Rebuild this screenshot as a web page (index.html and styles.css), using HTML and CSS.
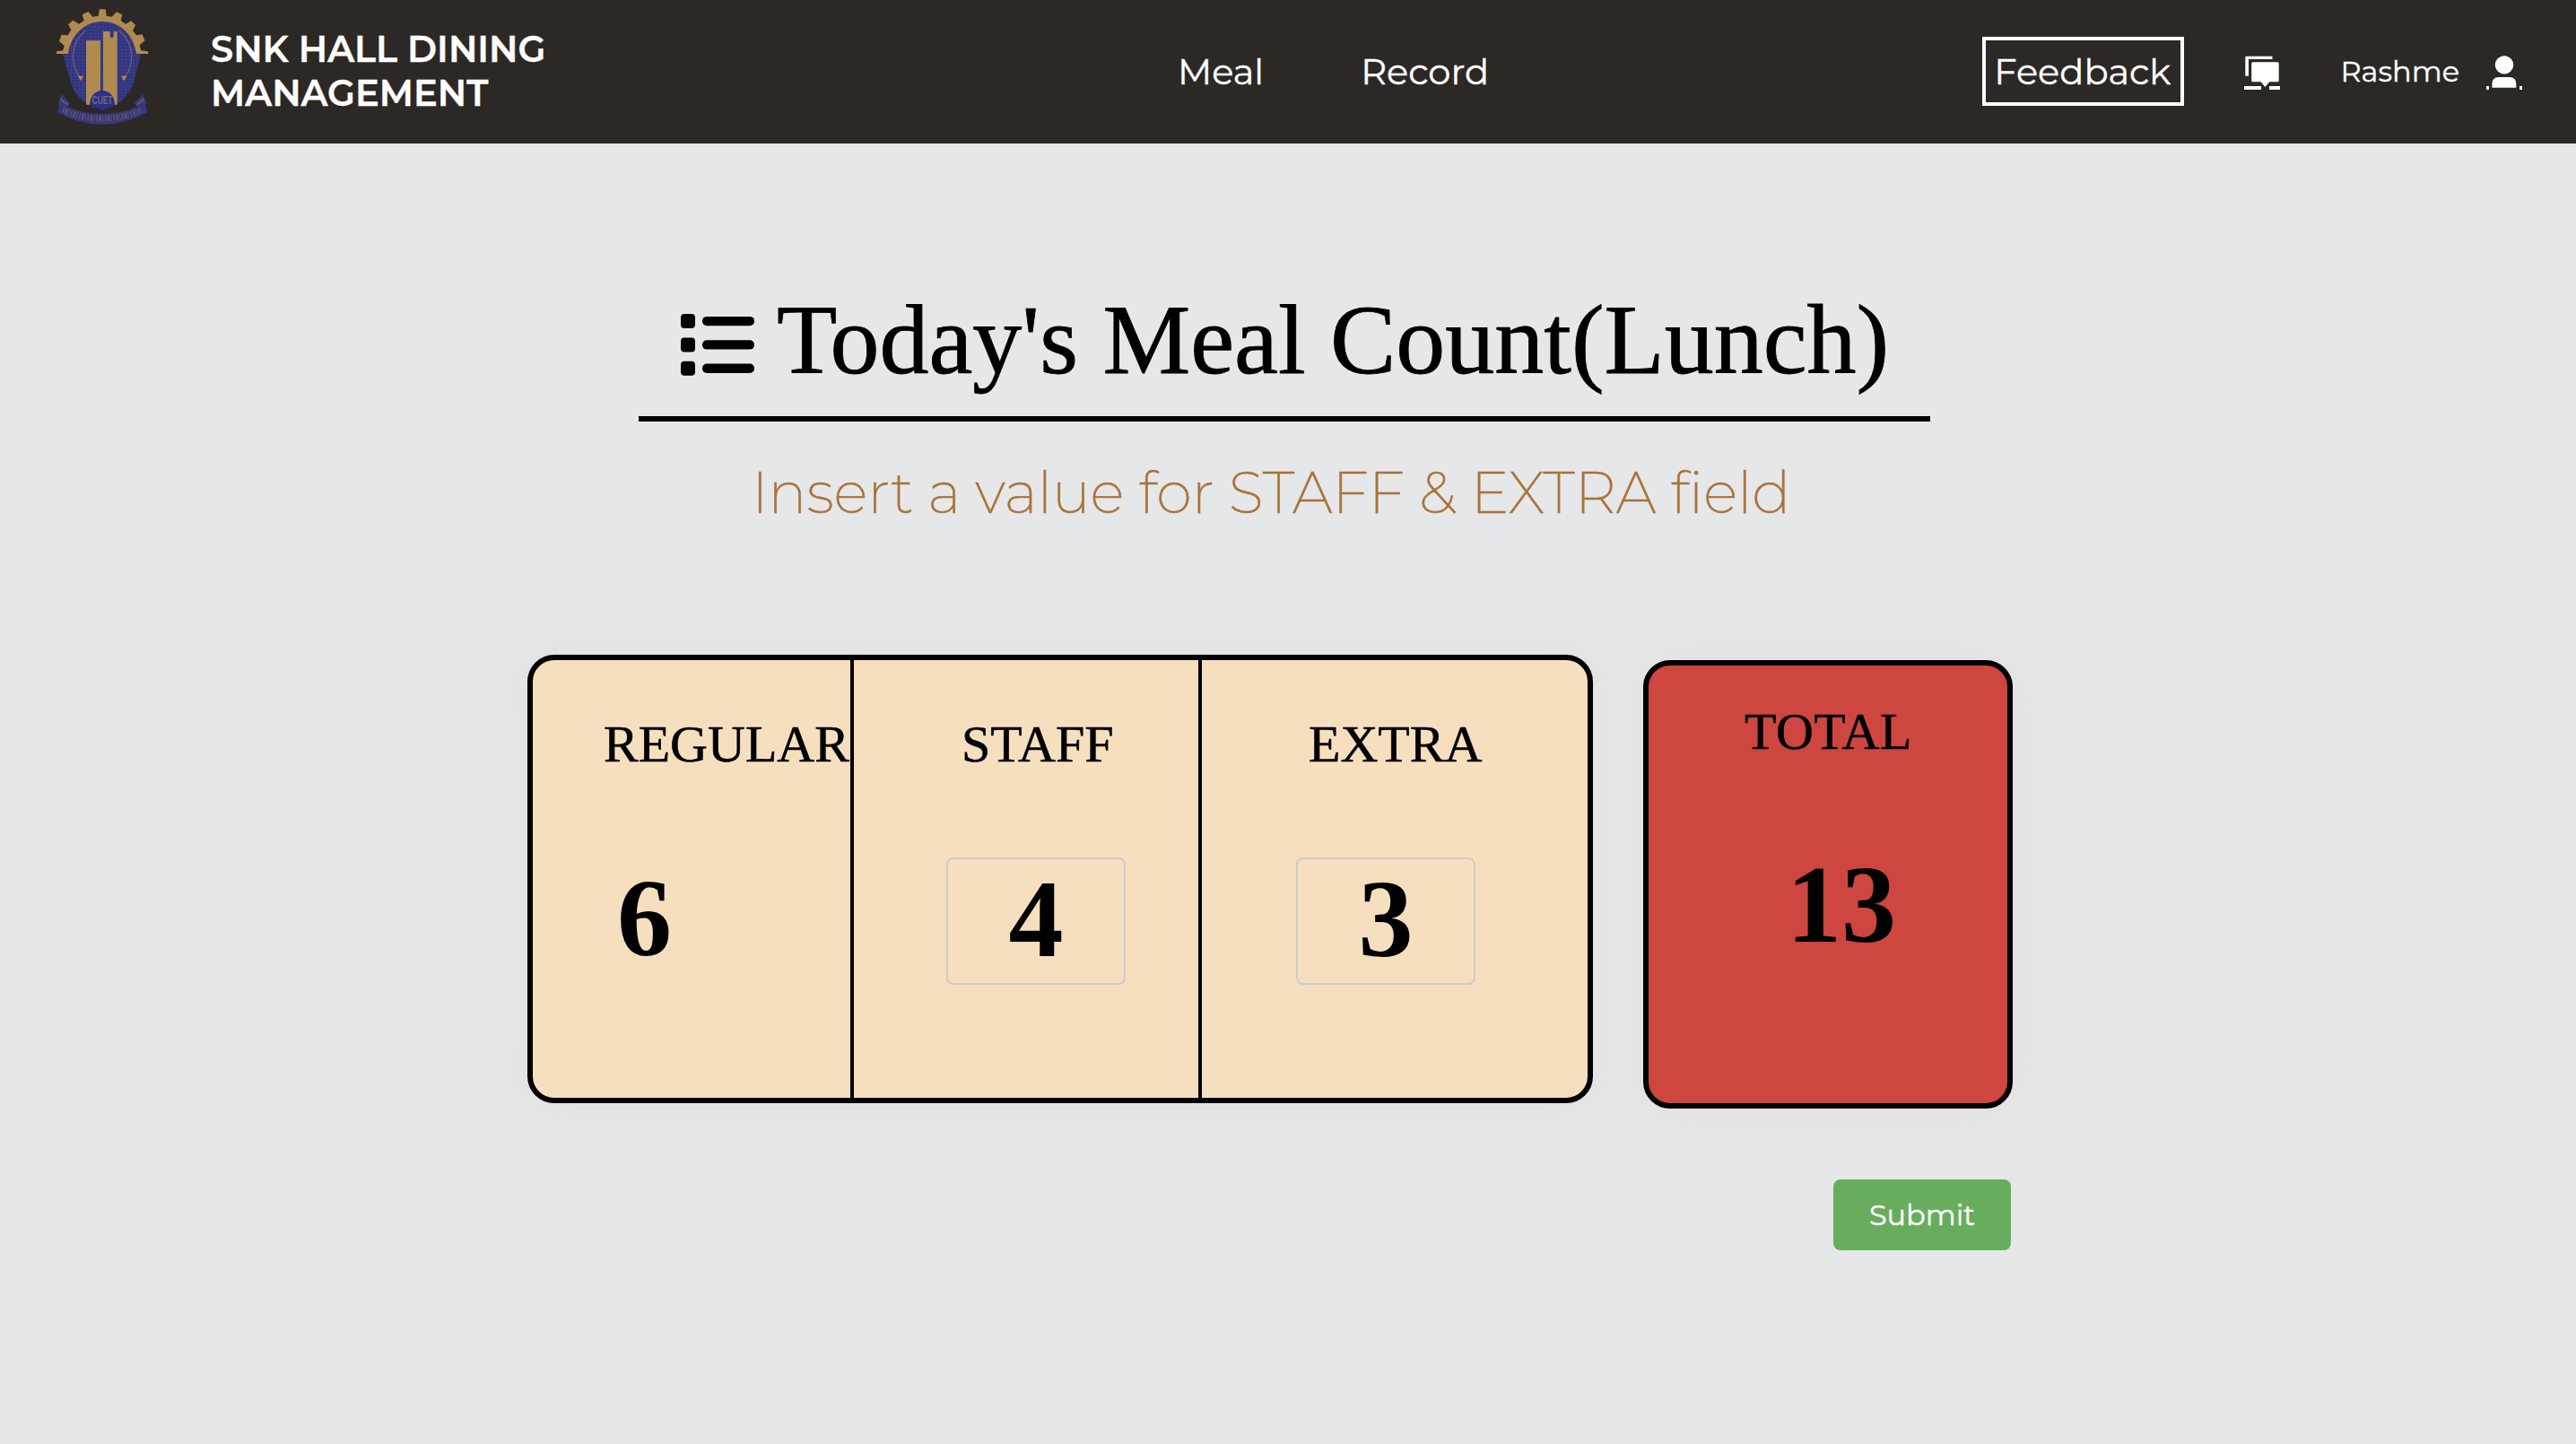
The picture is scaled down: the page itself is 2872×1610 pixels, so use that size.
FILE: index.html
```html
<!DOCTYPE html>
<html lang="en">
<head>
<meta charset="utf-8">
<title>SNK Hall Dining Management</title>
<link rel="stylesheet" href="styles.css">
</head>
<body>
<header class="navbar">
  <svg class="emblem" viewBox="0 0 480 480" aria-hidden="true">
    <defs>
      <pattern id="mesh" width="13" height="11" patternUnits="userSpaceOnUse">
        <path d="M0 0H13M0 0V11" stroke="#6b5d71" stroke-width="2.5" fill="none"/>
      </pattern>
    </defs>
    <path fill="#b08a4e" d="M68 180 L70 172 L91 169 L95 153 L78 138 L86 116 L107 118 L118 100 L108 82 L124 68 L144 80 L161 69 L155 49 L175 39 L190 56 L209 53 L213 31 L233 31 L236 53 L254 56 L270 40 L289 49 L284 69 L300 80 L319 70 L333 84 L324 103 L336 118 L356 115 L364 136 L347 151 L351 169 L375 172 L376 180Z"/>
    <path fill="#2e3384" d="M90 180 H108 C116 118 162 72 222 72 C282 72 328 118 336 180 H352 L328 272 C316 322 274 352 222 368 C170 352 128 322 116 272Z"/>
    <path fill="url(#mesh)" opacity=".6" d="M90 180 H108 C116 118 162 72 222 72 C282 72 328 118 336 180 H352 L328 272 C316 322 274 352 222 368 C170 352 128 322 116 272Z"/>
    <path d="M150 262 C112 218 114 145 166 102 M294 262 C332 218 330 145 278 102" fill="none" stroke="#6b5d71" stroke-width="4"/>
    <path d="M140 254 L159 254 L151 271Z M286 254 L305 254 L294 271Z" fill="#b08a4e"/>
    <path fill="#b08a4e" d="M168 136 H216 V350 H168Z M225 105 H248 V122 Q254 132 260 122 V105 H272 V350 H225Z"/>
    <path fill="#2a3189" d="M180 352 C180 322 198 303 222 303 C246 303 264 322 264 352 L222 370Z"/>
    <text x="222" y="349" text-anchor="middle" textLength="68" lengthAdjust="spacingAndGlyphs" class="emblem-text">CUET</text>
    <path fill="#373878" d="M86 315 L114 346 L104 357 Q222 405 340 357 L330 346 L357 315 L372 346 L366 353 L373 374 Q302 416 222 417 Q142 416 72 374 L79 353 L73 346Z"/>
    <path d="M90 368 Q222 426 354 368" fill="none" stroke="#5e5372" stroke-width="20" stroke-dasharray="4 5 7 4 3 6"/>
    <path d="M84 332 L106 350 M360 332 L338 350" stroke="#76657a" stroke-width="8" stroke-dasharray="5 4"/>
  </svg>
  <h1 class="brand">SNK HALL DINING<br>MANAGEMENT</h1>
  <nav class="links">
    <a>Meal</a>
    <a>Record</a>
  </nav>
  <div class="account">
    <a class="feedback">Feedback</a>
    <svg class="nav-icon" viewBox="0 0 40 40" fill="#fff" aria-hidden="true">
      <path d="M2.6 2.7H31.5V6H5V24.7H1.3V4A1.3 1.3 0 0 1 2.6 2.7Z"/>
      <path d="M9.7 9.3H37.2A1.5 1.5 0 0 1 38.7 10.8V29.8A1.5 1.5 0 0 1 37.2 31.3H28.2L23.4 37L18.6 31.3H9.7A1.5 1.5 0 0 1 8.2 29.8V10.8A1.5 1.5 0 0 1 9.7 9.3Z"/>
      <path d="M0 36H19V40H0ZM28 36H40V40H28Z"/>
    </svg>
    <span class="user">Rashme</span>
    <svg class="nav-icon" viewBox="0 0 40 40" fill="#fff" aria-hidden="true">
      <circle cx="20" cy="12.4" r="10.2"/>
      <path d="M6.4 37.7V33.5Q6.4 26 14 26H25.8Q33.3 26 33.3 33.5V37.7ZM0 36H3V40H0ZM37 36H40V40H37Z"/>
    </svg>
  </div>
</header>
<main class="page">
  <h2 class="title">
    <svg class="list-icon" viewBox="0 0 82 69" aria-hidden="true">
      <rect x="0" y="0" width="16" height="16" rx="4"/>
      <rect x="0" y="26.4" width="16" height="16" rx="4"/>
      <rect x="0" y="52.8" width="16" height="16" rx="4"/>
      <rect x="24" y="2.9" width="58" height="10.4" rx="5"/>
      <rect x="24" y="29.2" width="58" height="10.4" rx="5"/>
      <rect x="24" y="55.5" width="58" height="10.4" rx="5"/>
    </svg>
    <span>Today's Meal Count(Lunch)</span>
  </h2>
  <p class="hint">Insert a value for STAFF &amp; EXTRA field</p>
  <form class="counts">
    <section class="card meals">
      <div class="cell regular">
        <h3 class="label">REGULAR</h3>
        <span class="value">6</span>
      </div>
      <div class="cell staff">
        <h3 class="label">STAFF</h3>
        <input class="value field" type="text" value="4" aria-label="Staff">
      </div>
      <div class="cell extra">
        <h3 class="label">EXTRA</h3>
        <input class="value field" type="text" value="3" aria-label="Extra">
      </div>
    </section>
    <section class="card total">
      <h3 class="label">TOTAL</h3>
      <span class="value">13</span>
    </section>
    <button class="submit" type="button">Submit</button>
  </form>
</main>
</body>
</html>
```
FILE: styles.css
```css
* {
  box-sizing: border-box;
}

body {
  margin: 0;
  min-height: 1610px;
  background: #e5e7e9;
  color: #000;
  font-family: Montserrat, "Open Sans", sans-serif;
}

h1, h2, h3, p {
  margin: 0;
  font-weight: 400;
}

/* Navigation bar */
.navbar {
  display: flex;
  align-items: center;
  height: 160px;
  padding: 0 60px 1px 40px;
  background: #2c2825;
  color: #fff;
  font-size: 40px;
  line-height: 49px;
  white-space: nowrap;
  -webkit-text-stroke: 0.4px;
}

.emblem {
  width: 160px;
  height: 160px;
  margin-bottom: -1px;
}

.emblem-text {
  fill: #77667a;
  font: 700 36px "Liberation Sans", sans-serif;
}

.brand {
  width: 1078px;
  margin-left: 35px;
  padding-bottom: 1px;
  font-size: 40px;
  font-weight: 600;
}

.links {
  display: flex;
  gap: 108px;
}

.account {
  display: flex;
  align-items: center;
  margin-left: auto;
}

.feedback {
  margin-right: 67px;
  padding: 10px 11px 10px 9px;
  border: 4px solid #fff;
}

.nav-icon {
  width: 40px;
  height: 40px;
}

.user {
  margin: 0 30px 0 67.5px;
  font-size: 32px;
  line-height: 39px;
}

/* Heading */
.title {
  display: flex;
  width: 1440px;
  height: 152px;
  margin: 158px 0 0 712px;
  padding-left: 47px;
  border-bottom: 6px solid #000;
  font: 400 110px/122px "Liberation Serif", serif;
  white-space: nowrap;
  -webkit-text-stroke: 0.8px;
}

.list-icon {
  width: 82px;
  height: 69px;
  margin: 32px 25px 0 0;
}

.hint {
  margin: 40px 0 0 838px;
  color: #aa7339;
  font-size: 64px;
  font-weight: 200;
  line-height: 78px;
  -webkit-text-stroke: 0.6px;
}

/* Meal cards */
.counts {
  display: grid;
  grid-template-columns: 1188px 412px;
  column-gap: 56px;
  width: 1656px;
  margin: 142px 0 0 588px;
}

.card {
  height: 500px;
  border: 6px solid #000;
  border-radius: 30px;
  box-shadow: 0 0 40px rgba(228, 214, 214, 0.6);
  font-family: "Liberation Serif", serif;
}

.meals {
  display: grid;
  grid-template-columns: 358px 388px 430px;
  background: #f6dfbf;
}

.cell {
  padding-top: 61px;
}

.cell + .cell {
  border-left: 4px solid #000;
  margin-left: -4px;
}

.label {
  font-size: 58px;
  line-height: 65px;
  white-space: nowrap;
  -webkit-text-stroke: 0.6px;
}

.value {
  display: block;
  font: 700 122px/135px "Liberation Serif", serif;
}

.field {
  width: 200px;
  height: 142px;
  padding: 0 0 4px;
  border: 2px solid #ccc;
  border-radius: 8px;
  background: transparent;
  color: #000;
  text-align: center;
}

.regular .label {
  padding-left: 79px;
}

.regular .value {
  margin: 94px 0 0 94px;
}

.staff .label {
  padding-left: 120px;
}

.staff .field {
  margin: 94px 0 0 103px;
}

.extra .label {
  padding-left: 119px;
}

.extra .field {
  margin: 94px 0 0 105px;
}

.total {
  margin-top: 6px;
  padding: 41px 0 0 107px;
  background: #cd463f;
}

.total .label {
  letter-spacing: 0.5px;
}

.total .value {
  margin: 93px 0 0 47px;
}

.submit {
  grid-column: 2;
  justify-self: end;
  width: 198px;
  height: 79px;
  margin: 79px 2px 0 0;
  padding: 0;
  border: 0;
  border-radius: 8px;
  background: #68ad5e;
  color: #fff;
  font: 400 32px/39px Montserrat, "Open Sans", sans-serif;
  -webkit-text-stroke: 0.4px;
}
```
